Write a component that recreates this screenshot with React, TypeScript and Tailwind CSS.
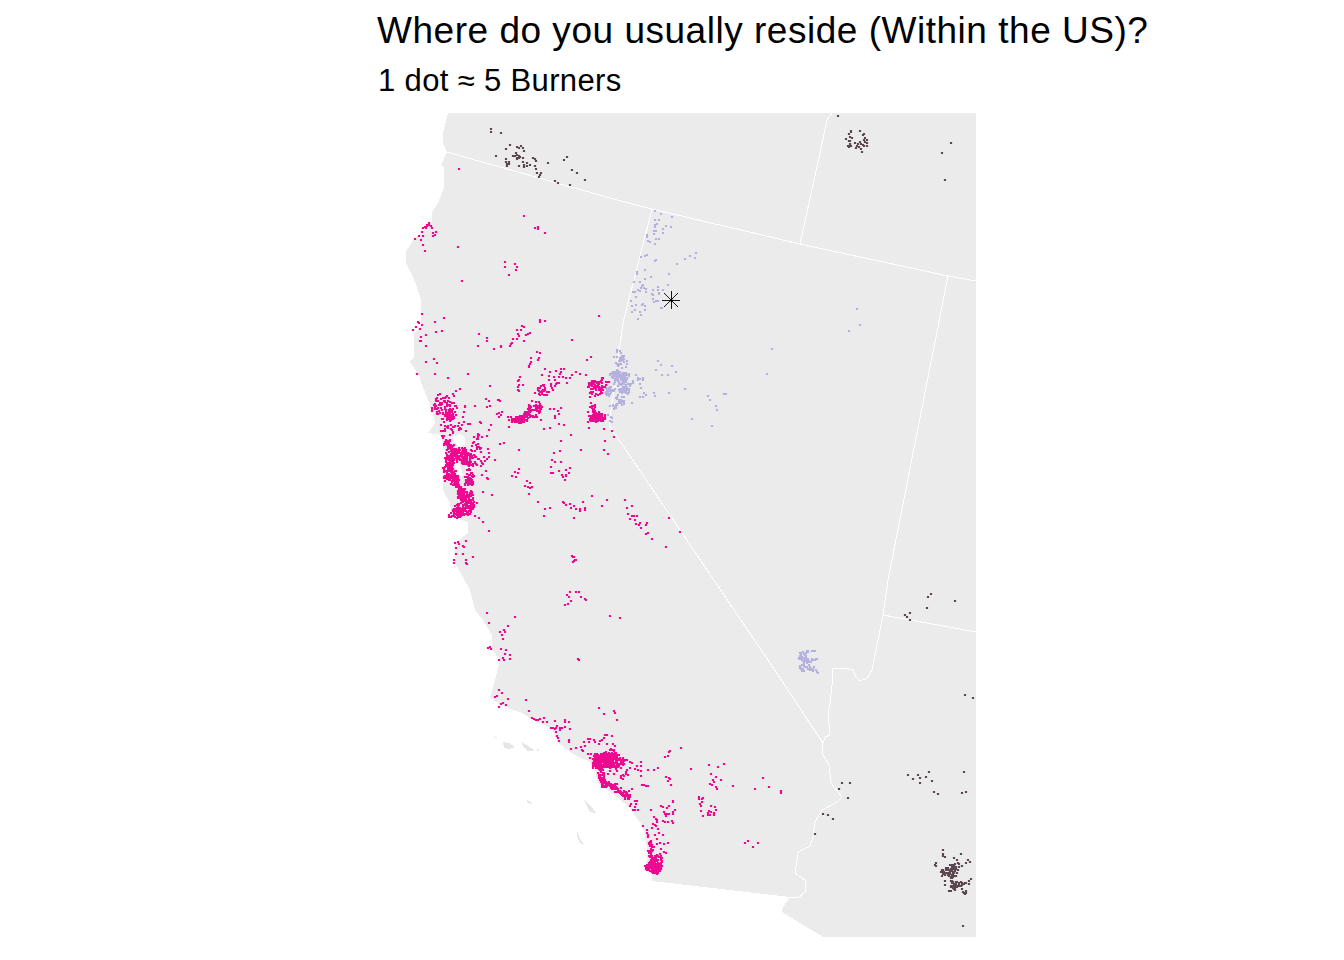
// one dot is about five people, points are read off the map and dense spots are seeded clusters
type Pt = [number, number];

function rng(seed: number) {
  let s = seed;
  return () => {
    s = (s + 0x6d2b79f5) | 0;
    let t = Math.imul(s ^ (s >>> 15), 1 | s);
    t = (t + Math.imul(t ^ (t >>> 7), 61 | t)) ^ t;
    return ((t ^ (t >>> 14)) >>> 0) / 4294967296;
  };
}

// read at 3x from a crop whose corner is (ox, oy)
function z(ox: number, oy: number, flat: number[]): Pt[] {
  const out: Pt[] = [];
  for (let i = 0; i < flat.length; i += 2) out.push([ox + flat[i] / 3, oy + flat[i + 1] / 3]);
  return out;
}

// rough edged patch, so that clusters don't come out as clean ovals
function blob(seed: number, cx: number, cy: number, rx: number, ry: number, n: number): Pt[] {
  const r = rng(seed);
  const lobes = [r() * 6.28, r() * 6.28, r() * 6.28];
  const out: Pt[] = [];
  for (let i = 0; i < n; i++) {
    const a = r() * Math.PI * 2;
    const edge = 1 + 0.22 * Math.sin(a * 2 + lobes[0]) + 0.16 * Math.sin(a * 3 + lobes[1]) + 0.1 * Math.sin(a * 5 + lobes[2]);
    const d = Math.pow(r(), 0.62) * edge;
    out.push([cx + Math.cos(a) * d * rx, cy + Math.sin(a) * d * ry]);
  }
  return out;
}

function strip(seed: number, x1: number, y1: number, x2: number, y2: number, w: number, n: number): Pt[] {
  const r = rng(seed);
  const out: Pt[] = [];
  for (let i = 0; i < n; i++) {
    const t = r();
    const k = w * (0.6 + 0.4 * Math.sin(t * 9 + seed));
    out.push([x1 + (x2 - x1) * t + (r() - 0.5) * 2 * k, y1 + (y2 - y1) * t + (r() - 0.5) * 2 * k]);
  }
  return out;
}

// nobody lives in the bay
function onLand([x, y]: Pt) {
  const north = x > 455 && x < 467 && y > 433 && y < 447;
  const south = y > 462 && y < 479 && x > 454 + (y - 462) * 0.3 && x < 462 + (y - 462) * 0.2;
  return !north && !south;
}

const pink: Pt[] = [
  ...z(370, 100, [
    267,207,462,348,495,384,503,381,503,387,524,399,264,441,405,486,405,501,435,492,441,501,438,510,417,525,276,543,156,642,222,654,144,666,147,669,138,681,129,690,150,687,156,675,195,666,198,696,216,693,153,711,168,705,150,723,153,723,168,738,327,702,351,714,351,723,324,738,372,747,393,738,393,741,420,738,423,732,426,729,429,717,441,717,441,690,453,690,456,678,462,681,444,702,447,708,468,705,474,702,480,699,462,723,510,660,510,666,525,663,687,648,606,720,501,756,510,759,483,774,507,774,504,780,483,786,480,792,477,798,477,801,663,771,651,780,192,777,201,789,168,786,141,822,195,822,234,834,294,822,360,858,270,867,258,873,
    176,370,170,375,165,380,160,385,182,378,185,385,157,397,190,398,197,396,195,405,188,408,135,417,147,408,160,408,154,420,158,435,165,453,172,378,168,384,178,376,
    525,807,540,816,558,813,573,807,582,807,573,816,570,822,516,825,537,828,552,831,567,831,579,831,588,834,600,834,606,825,618,816,630,822,648,825,537,840,555,840,543,852,558,852,564,849,519,855,510,864,522,858,504,864,507,873,516,879,525,870,543,858,549,870,537,876,510,885,522,885,495,879,450,831,447,840,444,843,447,855,459,855,444,870,348,897,357,903,384,900,390,903,360,918,351,921,387,939,396,936,381,942,393,945,387,951,
    513,858,519,870,507,882,525,864,516,873,
  ]),
  ...z(400, 380, [
    168,33,180,27,114,45,258,57,268,62,261,81,297,60,270,18,354,3,354,21,357,33,369,15,240,126,243,129,273,135,267,150,261,168,246,171,234,162,222,171,300,192,312,189,264,207,267,219,267,231,285,240,258,273,246,285,261,294,264,297,276,345,249,336,231,369,225,408,237,414,249,426,267,453,198,483,165,489,174,486,177,492,168,504,189,498,192,501,168,522,189,522,219,531,198,540,162,540,162,549,198,549,201,552,261,699,345,711,267,729,324,738,300,756,312,750,315,756,306,765,309,777,270,801,264,804,273,807,303,807,318,810,315,822,309,834,330,825,330,837,297,840,312,840,
    357,210,345,276,357,267,354,279,336,288,348,291,381,303,390,309,375,318,384,321,396,321,390,324,387,342,414,366,435,387,450,384,432,408,489,366,492,369,498,375,510,372,522,378,513,384,528,387,540,387,540,393,555,384,555,390,549,366,576,348,606,378,621,360,522,414,513,165,483,183,462,219,480,213,543,210,612,210,624,222,456,240,465,246,483,246,453,261,453,279,459,279,477,272,498,270,510,264,507,279,486,285,489,291,498,285,498,288,495,300,462,88,465,108,465,115,474,93,483,84,477,102,450,87,432,147,450,144,477,132,492,135,615,183,636,153,642,171,675,360,681,384,696,378,684,402,690,417,696,408,702,408,711,408,705,420,708,432,720,429,717,435,723,444,741,429,738,435,738,462,744,459,756,477,807,414,798,501,840,456,
    516,528,519,531,522,531,525,540,519,546,528,540,522,543,510,636,528,636,537,636,501,645,507,651,513,663,543,651,555,657,558,660,495,675,504,672,630,708,660,714,534,837,537,840,
    405,39,414,24,423,18,432,15,414,30,420,36,432,33,426,42,441,36,441,45,453,12,456,24,465,18,471,9,477,9,501,9,396,63,408,66,417,66,402,78,414,78,408,84,420,72,390,78,390,87,387,93,396,90,423,120,435,45,420,45,
    570,80,565,95,575,120,565,125,566,143,612,148,
  ]),
  ...z(480, 680, [
    57,30,66,39,84,57,138,60,45,51,51,48,69,69,63,72,78,75,57,81,147,93,357,84,372,102,402,93,405,99,411,120,
    156,114,162,117,168,120,174,120,180,117,192,114,190,126,201,126,225,123,255,120,255,126,267,126,213,144,219,144,225,147,228,144,231,138,240,144,240,150,246,144,255,141,270,147,229,156,231,168,234,174,237,183,267,180,267,186,273,207,288,204,303,201,306,210,309,213,315,198,312,186,324,177,330,177,327,186,342,180,345,186,360,183,357,192,375,165,381,165,372,174,366,180,396,168,381,192,399,192,405,198,324,222,333,222,330,234,
    432,240,438,240,450,246,456,249,483,246,483,258,471,258,450,264,441,270,438,276,423,264,465,267,474,270,483,273,504,270,522,270,534,264,483,288,429,285,432,288,444,285,429,297,555,231,564,228,567,216,570,213,603,204,633,267,687,255,714,261,732,252,693,282,708,291,723,300,699,300,702,306,690,312,696,315,708,321,711,327,759,318,825,327,849,294,867,321,903,333,903,339,558,291,567,294,564,303,570,297,573,315,486,315,492,315,498,318,504,318,456,327,447,333,441,339,
    657,351,657,357,666,357,669,354,666,366,660,372,663,378,663,393,669,408,693,378,705,381,708,390,687,393,693,396,684,399,684,405,690,405,702,399,702,405,795,489,804,483,819,501,834,489,
    465,363,471,363,468,372,453,372,450,378,465,381,465,390,459,390,474,390,543,378,549,381,561,384,567,378,579,363,579,366,552,396,555,402,561,402,567,402,579,402,585,390,579,396,558,408,513,390,522,411,528,417,531,420,531,426,528,438,519,432,525,435,516,444,549,423,555,426,564,426,576,423,579,429,489,438,501,450,501,459,504,465,504,471,525,465,534,447,537,459,549,465,531,477,531,492,540,489,552,492,564,489,543,507,552,516,558,519,
  ]),
  ...blob(11, 597, 387, 10, 10, 75),
  ...blob(12, 597, 417, 8, 6, 95),
  ...blob(37, 598, 418, 5, 4, 45),
  ...strip(13, 593, 405, 595, 415, 3, 18),
  ...strip(14, 513, 422, 541, 407, 6, 120),
  ...blob(15, 519, 420, 7, 4, 45),
  ...blob(16, 444, 405, 14, 9, 60),
  ...blob(17, 449, 416, 7, 6, 50),
  ...blob(19, 452, 412, 20, 20, 35),
  ...strip(20, 444, 438, 455, 454, 6, 90),
  ...blob(21, 451, 461, 6, 9, 110),
  ...strip(22, 446, 478, 452, 468, 3.5, 30),
  ...blob(23, 464, 457, 8, 10, 140),
  ...blob(24, 476, 454, 9, 18, 50),
  ...blob(25, 469, 479, 6, 7, 55),
  ...strip(26, 449, 472, 471, 506, 7, 320),
  ...blob(27, 460, 511, 10, 8, 150),
  ...blob(28, 455, 428, 14, 6, 22),
  ...blob(29, 607, 761, 14, 9, 360),
  ...blob(30, 612, 755, 10, 5, 50),
  ...blob(36, 609, 764, 19, 13, 45),
  ...strip(31, 600, 770, 604, 787, 4, 46),
  ...strip(32, 603, 781, 617, 789, 4, 55),
  ...strip(33, 616, 789, 629, 798, 4, 55),
  ...blob(34, 655, 865, 9, 8, 190),
  ...strip(35, 650, 842, 651, 858, 4, 42),
].filter(onLand);

const lilac: Pt[] = [
  ...z(590, 200, [
    195,33,213,42,246,51,195,60,207,60,201,72,195,75,195,81,228,78,243,81,192,93,198,93,219,87,219,99,192,102,171,105,171,111,198,117,207,117,174,123,180,126,195,132,171,165,165,168,153,172,198,180,195,183,318,159,300,168,315,174,285,177,261,192,165,210,141,216,141,222,237,222,183,231,165,237,132,246,150,246,234,255,159,255,156,258,153,264,162,264,168,267,144,270,150,273,204,261,189,270,204,270,219,270,129,276,135,276,207,279,168,276,186,282,189,285,207,282,138,291,189,297,192,306,198,303,204,303,123,303,126,318,138,315,156,315,159,312,165,318,165,330,135,330,126,336,150,336,153,345,144,357,213,324,216,324,
    801,327,810,375,777,393,546,447,531,522,
    204,483,213,495,246,498,198,510,258,516,216,525,234,525,138,525,285,567,192,579,237,579,195,588,168,585,162,579,150,591,159,591,126,609,354,588,360,600,402,582,408,582,378,618,381,630,306,657,366,678,
    153,564,150,552,144,534,150,537,159,534,159,540,144,540,129,543,129,549,
    62,652,66,655,60,662,66,665,54,645,
  ]),
  ...blob(41, 620, 377, 10, 6, 105),
  ...blob(42, 625, 389, 7, 7, 38),
  ...blob(43, 620, 360, 7, 10, 30),
  ...blob(44, 609, 391, 5, 5, 26),
  ...strip(45, 613, 407, 624, 401, 3, 26),
  ...blob(46, 618, 394, 11, 11, 20),
  ...blob(47, 803, 658, 6, 9, 42),
  ...strip(48, 806, 651, 817, 651, 2, 10),
  ...strip(49, 806, 662, 818, 659, 2, 16),
  ...strip(50, 803, 668, 817, 670, 3.5, 32),
];

const plum: Pt[] = [
  ...z(370, 0, [
    363,387,363,396,393,399,420,436,408,447,441,441,447,444,453,438,459,444,462,453,378,468,438,459,429,468,435,468,441,465,447,468,441,474,447,474,450,471,441,477,408,477,408,486,417,486,411,492,417,492,411,498,459,474,459,486,471,489,480,495,447,498,462,495,462,501,471,498,489,474,495,477,498,483,495,498,498,507,501,519,513,519,510,525,507,531,534,489,582,480,591,471,606,510,621,519,645,540,555,543,564,549,600,555,
  ]),
  ...z(820, 105, [
    54,33,93,78,93,81,120,78,132,87,129,90,87,87,90,96,96,99,78,102,135,99,141,105,132,105,135,111,87,108,90,108,105,114,90,117,84,123,90,123,87,126,93,123,120,111,114,117,123,117,111,123,117,126,108,129,129,120,132,123,141,114,141,123,123,132,126,141,393,114,366,144,375,225,
  ]),
  ...z(770, 580, [
    483,42,474,51,555,63,471,84,420,99,405,105,411,111,420,120,585,345,609,354,477,576,582,576,414,585,444,585,429,597,450,594,468,591,486,603,450,609,492,636,504,642,576,639,588,636,216,609,240,609,207,627,234,654,159,702,174,705,189,717,135,762,579,1038,
    519,810,519,822,519,828,525,831,573,822,552,834,561,840,594,840,588,849,600,846,498,849,495,855,498,858,525,903,525,915,603,897,546,921,537,933,543,933,576,858,516,888,
  ]),
  ...blob(61, 951, 871, 9, 7, 80),
  ...blob(62, 955, 884, 5, 5, 32),
  ...strip(63, 962, 884, 968, 882, 2, 12),
  ...strip(64, 961, 891, 966, 893, 2, 10),
];

// a 2px core on whole pixels with a faint fringe round it
function toPath(pts: Pt[]) {
  return pts.map(([x, y]) => `M${Math.round(x) - 1.1} ${Math.round(y) - 1.1}h2.2v2.2h-2.2z`).join("");
}

const land =
  "448,113 443,133 443,143 447,152 441,165 444,168 444,188 438,203 432,212 432,222 413,240 406,252 406,263 412,275 417,287 421,300 421,327 414,333 414,357 410,362 420,377 420,380 428,400 433,413 435,423 428,433 442,435 443,447 448,457 443,477 443,490 450,503 452,517 468,522 468,533 455,543 455,563 463,577 470,590 475,610 483,620 492,635 492,650 500,660 495,680 490,698 507,708 520,712 537,722 552,728 558,743 575,755 590,762 595,768 598,783 617,797 630,808 643,827 648,853 645,870 652,872 652,881 790,897 783,907 782,912 823,937 976,937 976,113";

const islands = [
  "503,742 509,743 515,747 510,749 504,748",
  "522,742 527,745 535,751 528,751 523,747",
  "537,749 539,749 539,751 537,751",
  "493,736 497,737 496,738",
  "527,800 531,802 532,804 528,803",
  "584,800 590,805 596,813 590,812 587,806",
  "577,830 579,836 584,845 580,843 577,836",
];

const bays = [
  "453,437 460,434 465,437 465,445 458,446 454,442",
  "455,461 459,463 463,474 461,478 456,472",
];

const borders = [
  "447,152 617,200 652,209 800,244 948,276 976,281",
  "832,113 827,120 820,153 800,244",
  "652,209 623,323 609,425 770,663 823,743",
  "948,276 888,580 883,615 872,670 867,678 860,681 856,677 853,670 845,668 833,668 832,685 830,703 828,715 830,735 825,737 823,743 822,753 829,765 831,783 842,797 837,802 822,810 815,822 813,837 810,846 798,852 795,873 805,880 805,892 798,898 790,897",
  "883,615 976,632",
];

export default function App() {
  return (
    <div className="w-[1344px] h-[960px] bg-white pl-[377px] pt-[9px] font-['Liberation_Sans',Arial,sans-serif] text-black overflow-hidden">
      <h1 className="text-[37px] leading-[44px] tracking-[0.52px] font-normal">Where do you usually reside (Within the US)?</h1>
      <p className="text-[31px] leading-[34px] tracking-[0.35px] mt-[11px] ml-[1px]">1 dot ≈ 5 Burners</p>
      <svg className="block mt-[15px] ml-[28px]" width="571" height="824" viewBox="405 113 571 824">
        <polygon points={land} fill="#EBEBEB" shapeRendering="crispEdges" />
        {islands.map((p) => (
          <polygon key={p} points={p} fill="#E6E6E6" shapeRendering="crispEdges" />
        ))}
        {bays.map((p) => (
          <polygon key={p} points={p} fill="#FFFFFF" shapeRendering="crispEdges" />
        ))}
        {borders.map((p) => (
          <polyline key={p} points={p} fill="none" stroke="#FFFFFF" strokeWidth="1" shapeRendering="crispEdges" />
        ))}
        <path d={toPath(lilac)} fill="#B4B1DE" />
        <path d={toPath(pink)} fill="#EE0A90" />
        <path d={toPath(plum)} fill="#5C4650" />
        <g stroke="#000000" strokeWidth="0.9">
          <line x1="662" y1="300.5" x2="680" y2="300.5" />
          <line x1="671.5" y1="291" x2="671.5" y2="309" />
          <line x1="664" y1="293" x2="678" y2="307" />
          <line x1="678" y1="293" x2="664" y2="307" />
          <circle cx="671.5" cy="300.5" r="1" fill="#000000" />
        </g>
      </svg>
    </div>
  );
}
